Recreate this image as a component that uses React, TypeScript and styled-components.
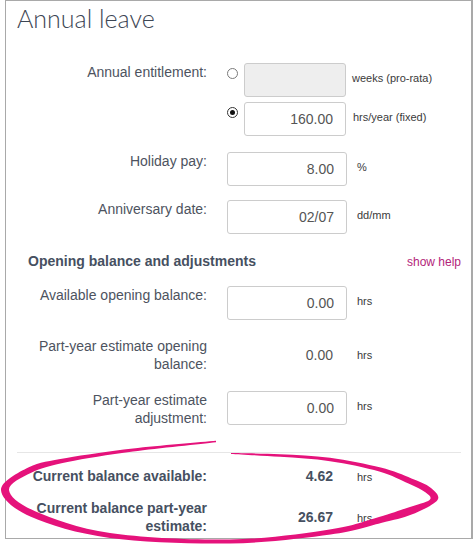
import styled, { createGlobalStyle } from "styled-components";

type Pt = [number, number];

const GlobalStyle = createGlobalStyle`
  html, body {
    margin: 0;
    padding: 0;
    background: #fff;
  }
  body {
    font-family: "Liberation Sans", Arial, sans-serif;
  }
`;

const Page = styled.div`
  position: relative;
  width: 473px;
  height: 544px;
  overflow: hidden;
`;

const Panel = styled.section`
  box-sizing: border-box;
  margin-left: 5px;
  width: 468px;
  height: 539px;
  border: 1px solid #a9a9a9;
  border-right-width: 2px;
  padding: 0 10px 0 11px;
`;

const Title = styled.h2`
  margin: 0;
  font-family: Lato, "Open Sans", sans-serif;
  font-weight: 300;
  font-size: 25px;
  line-height: 34px;
  color: #3d4654;
`;

const Form = styled.div`
  margin: 28px 0 0 5px;
`;

const Row = styled.div<{ $mt: number; $center?: boolean }>`
  display: grid;
  grid-template-columns: 205px 120px 1fr;
  align-items: ${(p) => (p.$center ? "center" : "start")};
  margin-top: ${(p) => p.$mt}px;
`;

const Label = styled.div<{ $bold?: boolean }>`
  box-sizing: border-box;
  padding-right: 20px;
  text-align: right;
  font-size: 14px;
  line-height: 18px;
  font-weight: ${(p) => (p.$bold ? 700 : 400)};
  color: ${(p) => (p.$bold ? "#465061" : "#4d5360")};
  padding-top: ${(p) => (p.$bold ? 0 : 0)}px;
`;

const Input = styled.input`
  box-sizing: border-box;
  width: 100%;
  height: 34px;
  margin: 0;
  border: 1px solid #cccccc;
  border-radius: 3px;
  padding: 0 12px;
  text-align: right;
  font-family: "Liberation Sans", Arial, sans-serif;
  font-size: 14px;
  color: #555;
  background: #fff;
  outline: none;

  &:disabled {
    background: #eeeeee;
  }
`;

const Unit = styled.span<{ $inset?: number; $top?: number }>`
  display: block;
  padding-left: ${(p) => p.$inset ?? 10}px;
  padding-top: ${(p) => p.$top ?? 8}px;
  font-size: 11px;
  line-height: 14px;
  color: #3a3a3a;
  white-space: nowrap;
`;

const Value = styled.div<{ $bold?: boolean }>`
  padding-right: 14px;
  text-align: right;
  font-size: 14px;
  line-height: 18px;
  font-weight: ${(p) => (p.$bold ? 700 : 400)};
  color: ${(p) => (p.$bold ? "#465061" : "#555")};
`;

const Choices = styled.div`
  grid-column: 2 / 4;
  display: flex;
  flex-direction: column;
  gap: 5px;
`;

const Choice = styled.div`
  display: flex;
  align-items: flex-start;
`;

const Radio = styled.span<{ $checked?: boolean }>`
  box-sizing: border-box;
  flex: none;
  width: 11px;
  height: 11px;
  margin: 5px 6px 0 0;
  border-radius: 50%;
  border: 1px solid ${(p) => (p.$checked ? "#333" : "#7a7a7a")};
  background: #fff;
  display: flex;
  align-items: center;
  justify-content: center;

  &::after {
    content: "";
    width: 5px;
    height: 5px;
    border-radius: 50%;
    background: ${(p) => (p.$checked ? "#111" : "transparent")};
  }
`;

const ChoiceInput = styled(Input)`
  width: 102px;
  flex: none;
`;

const SectionHead = styled.div`
  display: flex;
  justify-content: space-between;
  align-items: baseline;
  margin-top: 18px;
  padding-left: 6px;
`;

const SectionTitle = styled.h3`
  margin: 0;
  font-size: 14px;
  line-height: 18px;
  font-weight: 700;
  color: #465061;
`;

const HelpLink = styled.a`
  font-size: 12px;
  color: #b3237a;
  text-decoration: none;
  cursor: pointer;
`;

const Divider = styled.hr`
  margin: 25px 0 0 -5px;
  border: 0;
  border-top: 1px solid #e6e6e6;
  height: 0;
`;

const Scribble = styled.svg`
  position: absolute;
  left: 0;
  top: 0;
  pointer-events: none;
`;

// hand-drawn marker loop round the totals, outer edge then inner edge
const outer: Pt[] = [
  [216, 440.8], [133, 448.5], [66.5, 458], [28.8, 467.3], [1, 490],
  [30.9, 516.8], [110, 538], [230, 543.5], [330.5, 534.5], [381, 523],
  [411.6, 514.6], [437.5, 500], [430.3, 487.4], [411.5, 478.4],
  [380.7, 467.6], [330, 457.8], [280, 454.2], [231, 453.1],
];
const inner: Pt[] = [
  [231, 453.9], [280, 456.8], [330, 461.2], [379.3, 471.4], [408.5, 483.6],
  [425.7, 492.6], [429.5, 500], [408.4, 507.4], [379, 517], [329.5, 529.5],
  [230, 539.5], [110, 533], [35.1, 511.2], [9, 490], [31.2, 472.7],
  [67.5, 462], [133, 451.5], [216, 442.2],
];

const smooth = (pts: Pt[]) => {
  let d = "";
  for (let i = 0; i < pts.length - 1; i++) {
    const p0 = pts[i - 1] ?? pts[i];
    const p1 = pts[i];
    const p2 = pts[i + 1];
    const p3 = pts[i + 2] ?? p2;
    const c1x = p1[0] + (p2[0] - p0[0]) / 6;
    const c1y = p1[1] + (p2[1] - p0[1]) / 6;
    const c2x = p2[0] - (p3[0] - p1[0]) / 6;
    const c2y = p2[1] - (p3[1] - p1[1]) / 6;
    d += ` C${c1x.toFixed(1)},${c1y.toFixed(1)} ${c2x.toFixed(1)},${c2y.toFixed(1)} ${p2[0]},${p2[1]}`;
  }
  return d;
};

const loopPath =
  `M${outer[0][0]},${outer[0][1]}` +
  smooth(outer) +
  ` L${inner[0][0]},${inner[0][1]}` +
  smooth(inner) +
  " Z";

const App = () => {
  return (
    <Page>
      <GlobalStyle />
      <Panel>
        <Title>Annual leave</Title>
        <Form>
          <Row $mt={0}>
            <Label>Annual entitlement:</Label>
            <Choices>
              <Choice>
                <Radio />
                <ChoiceInput disabled value="" readOnly />
                <Unit $inset={6}>weeks (pro-rata)</Unit>
              </Choice>
              <Choice>
                <Radio $checked />
                <ChoiceInput value="160.00" readOnly />
                <Unit $inset={7}>hrs/year (fixed)</Unit>
              </Choice>
            </Choices>
          </Row>

          <Row $mt={16}>
            <Label>Holiday pay:</Label>
            <Input value="8.00" readOnly />
            <Unit>%</Unit>
          </Row>

          <Row $mt={14}>
            <Label>Anniversary date:</Label>
            <Input value="02/07" readOnly />
            <Unit>dd/mm</Unit>
          </Row>

          <SectionHead>
            <SectionTitle>Opening balance and adjustments</SectionTitle>
            <HelpLink>show help</HelpLink>
          </SectionHead>

          <Row $mt={16}>
            <Label>Available opening balance:</Label>
            <Input value="0.00" readOnly />
            <Unit>hrs</Unit>
          </Row>

          <Row $mt={17} $center>
            <Label>Part-year estimate opening balance:</Label>
            <Value>0.00</Value>
            <Unit $top={0}>hrs</Unit>
          </Row>

          <Row $mt={18}>
            <Label>Part-year estimate adjustment:</Label>
            <Input value="0.00" readOnly />
            <Unit>hrs</Unit>
          </Row>

          <Divider />

          <Row $mt={14} $center>
            <Label $bold>Current balance available:</Label>
            <Value $bold>4.62</Value>
            <Unit $top={2}>hrs</Unit>
          </Row>

          <Row $mt={14} $center>
            <Label $bold>Current balance part-year estimate:</Label>
            <Value $bold>26.67</Value>
            <Unit $top={2}>hrs</Unit>
          </Row>
        </Form>
      </Panel>
      <Scribble width="473" height="544" viewBox="0 0 473 544">
        <path d={loopPath} fill="#e5127b" />
      </Scribble>
    </Page>
  );
};

export default App;
